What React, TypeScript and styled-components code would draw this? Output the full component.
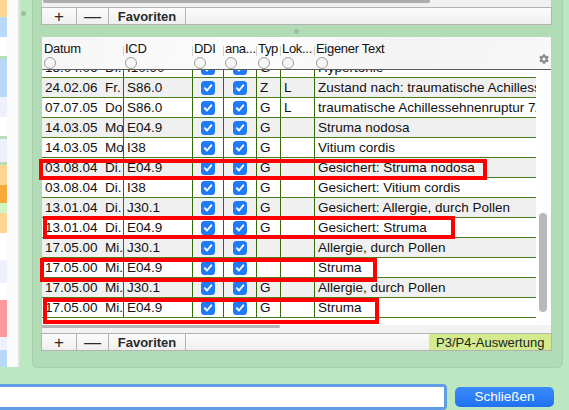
import styled, { createGlobalStyle } from "styled-components";
import { FaCog } from "react-icons/fa";

const GREEN_LINE = "#356a0c";
const COLS = "81px 69px 31px 33px 24px 34px 222px";

const GlobalStyle = createGlobalStyle`
  html, body {
    margin: 0;
    padding: 0;
  }
  body {
    width: 569px;
    height: 410px;
    overflow: hidden;
    background: #bce7c1;
    font-family: "Liberation Sans", Arial, sans-serif;
    font-size: 13.5px;
    color: #111;
  }
`;

const Window = styled.div`
  position: relative;
  display: flex;
  flex-direction: column;
  width: 569px;
  height: 410px;
`;

const Main = styled.div`
  display: flex;
  height: 383px;
`;

const SideList = styled.div`
  display: flex;
  width: 20px;
  height: 367px;
`;

const ColorColumn = styled.div`
  display: flex;
  flex-direction: column;
  width: 7px;
`;

const Segment = styled.div<{ $h: number; $c: string }>`
  height: ${(p) => p.$h}px;
  background: ${(p) => p.$c};
`;

const BlankColumn = styled.div`
  flex: 1;
  background: #fbfbfb;
  border-right: 2px solid #e2e2e2;
`;

const Gutter = styled.div`
  width: 12px;
  padding: 11px 0 0 1px;
  box-sizing: border-box;
`;

const Grip = styled.div`
  width: 5px;
  height: 5px;
  border-radius: 50%;
  background: #9dbfa0;
`;

const Panel = styled.div`
  display: flex;
  flex-direction: column;
  width: 531px;
  height: 368px;
  box-sizing: border-box;
  padding: 0 10px 0 8px;
  background: #b2dcb5;
  border: 1px solid #a7cfaa;
  border-top: none;
  border-radius: 0 0 6px 6px;
`;

const UpperTail = styled.div`
  height: 7px;
  background: #f0f0f0;
  border-left: 1px solid #c8c8c8;
  border-right: 1px solid #c8c8c8;
  box-sizing: border-box;
`;

const UpperThumb = styled.div`
  width: 387px;
  height: 3px;
  margin-left: 1px;
  background: #adadad;
  border-radius: 0 0 2px 2px;
`;

const Toolbar = styled.div`
  display: flex;
  height: 18px;
  box-sizing: border-box;
  border: 1px solid #b3b3b3;
  background: linear-gradient(#fbfbfb, #efefef);
`;

const ToolButton = styled.div<{ $w: number; $bold?: boolean }>`
  display: flex;
  align-items: center;
  justify-content: center;
  width: ${(p) => p.$w}px;
  border-right: 1px solid #b3b3b3;
  font-size: ${(p) => (p.$bold ? "13px" : "17px")};
  font-weight: ${(p) => (p.$bold ? 700 : 400)};
  color: #2a2a2a;
  line-height: 1;
`;

const Filler = styled.div`
  flex: 1;
`;

const ReportButton = styled.div`
  display: flex;
  align-items: center;
  width: 122px;
  padding-left: 7px;
  box-sizing: border-box;
  background: #d3eb8e;
  color: #222;
  font-size: 13px;
  white-space: nowrap;
`;

const Splitter = styled.div`
  display: flex;
  align-items: center;
  justify-content: center;
  height: 12px;
`;

const TableFrame = styled.div`
  display: flex;
  flex-direction: column;
  height: 296px;
  background: #fff;
  border-left: 1px solid #c8c8c8;
  border-right: 1px solid #c8c8c8;
`;

const Header = styled.div`
  display: grid;
  grid-template-columns: ${COLS} 1fr;
  height: 33px;
  box-sizing: border-box;
  border-bottom: 1px solid #5a5a5a;
  background: linear-gradient(100deg, #f6f6f6 0%, #fcfcfc 45%, #f3f3f3 70%, #f8f8f8 100%);
`;

const HeaderCell = styled.div<{ $first?: boolean }>`
  position: relative;
  display: flex;
  flex-direction: column;
  padding: 4px 0 0 2px;
  overflow: hidden;

  &::before {
    content: "";
    display: ${(p) => (p.$first ? "none" : "block")};
    position: absolute;
    left: 0;
    top: 9px;
    height: 10px;
    border-left: 1px solid #d0d0d0;
  }
`;

const HeaderLabel = styled.span`
  font-size: 13px;
  line-height: 15px;
  letter-spacing: -0.3px;
  white-space: nowrap;
`;

const Radio = styled.span`
  width: 10px;
  height: 10px;
  margin-top: 1px;
  border-radius: 50%;
  border: 1px solid #9c9c9c;
  background: #f6f6f6;
`;

const GearCell = styled.div`
  display: flex;
  align-items: flex-end;
  justify-content: center;
  padding-bottom: 5px;
  color: #8c8c8c;
`;

const Body = styled.div`
  display: flex;
  height: 255px;
  overflow: hidden;
`;

const RowsArea = styled.div`
  width: 494px;
  overflow: hidden;
`;

const RowsTrack = styled.div`
  margin-top: -12px;
`;

const Row = styled.div<{ $alt: boolean }>`
  display: grid;
  grid-template-columns: ${COLS};
  height: 20px;
  box-sizing: border-box;
  border-bottom: 1px solid #4a7d1c;
  background: ${(p) => (p.$alt ? "#f0f0f0" : "#ffffff")};
`;

const Cell = styled.div<{ $first?: boolean; $center?: boolean }>`
  display: flex;
  align-items: center;
  justify-content: ${(p) => (p.$center ? "center" : "flex-start")};
  padding: 0 ${(p) => (p.$center ? "0" : "3px")};
  border-left: ${(p) => (p.$first ? "none" : `1px solid ${GREEN_LINE}`)};
  overflow: hidden;
  white-space: pre;
  line-height: 19px;
`;

const Check = styled.span`
  display: flex;
  align-items: center;
  justify-content: center;
  width: 14px;
  height: 14px;
  border-radius: 3.5px;
  background: #1f7bf6;
`;

const VScroll = styled.div`
  flex: 1;
  background: #fdfdfd;
`;

const VThumb = styled.div`
  width: 8px;
  height: 99px;
  margin: 143px 0 0 3px;
  border-radius: 4px;
  background: #b9b9b9;
`;

const HScroll = styled.div`
  height: 8px;
  background: #f2f2f2;
`;

const HThumb = styled.div`
  width: 238px;
  height: 3px;
  border-radius: 0 2px 2px 0;
  background: #b5b5b5;
`;

const BottomBar = styled.div`
  display: flex;
  align-items: center;
  height: 27px;
`;

const Field = styled.div`
  width: 447px;
  height: 26px;
  box-sizing: border-box;
  background: #fff;
  border: 3px solid #5f9ee6;
  border-left: none;
  border-radius: 0 4px 4px 0;
`;

const CloseButton = styled.div`
  display: flex;
  align-items: center;
  justify-content: center;
  width: 99px;
  height: 20px;
  margin-left: 8px;
  border-radius: 5px;
  background: linear-gradient(#3b8cf8, #1f71f2);
  color: #fff;
  font-size: 13.5px;
`;

const Annotation = styled.div<{ $x: number; $y: number; $w: number; $h: number }>`
  position: absolute;
  left: ${(p) => p.$x}px;
  top: ${(p) => p.$y}px;
  width: ${(p) => p.$w}px;
  height: ${(p) => p.$h}px;
  box-sizing: border-box;
  border: 4px solid #ff0000;
  pointer-events: none;
`;

const segments: [number, string][] = [
  [17, "#fdd692"],
  [20, "#b8d9f8"],
  [19, "#ffffff"],
  [3, "#b9dcbb"],
  [19, "#b8d9f8"],
  [19, "#b8d9f8"],
  [20, "#eef1fb"],
  [19, "#ffffff"],
  [3, "#b9dcbb"],
  [23, "#eef1fb"],
  [3, "#b9dcbb"],
  [20, "#fdd692"],
  [18, "#f9a83a"],
  [10, "#cdf6c1"],
  [20, "#fdd692"],
  [27, "#ffffff"],
  [23, "#eef1fb"],
  [17, "#ffffff"],
  [37, "#fc999f"],
  [13, "#eef1fb"],
  [17, "#b8d9f8"],
];

type Entry = {
  date: string;
  icd: string;
  typ: string;
  lok: string;
  text: string;
};

const entries: Entry[] = [
  { date: "15.04.06  Di.", icd: "I10.90", typ: "G", lok: "", text: "Hypertonie" },
  { date: "24.02.06  Fr.", icd: "S86.0", typ: "Z", lok: "L", text: "Zustand nach: traumatische Achillessehnenruptur" },
  { date: "07.07.05  Do.", icd: "S86.0", typ: "G", lok: "L", text: "traumatische Achillessehnenruptur 7/05" },
  { date: "14.03.05  Mo.", icd: "E04.9", typ: "G", lok: "", text: "Struma nodosa" },
  { date: "14.03.05  Mo.", icd: "I38", typ: "G", lok: "", text: "Vitium cordis" },
  { date: "03.08.04  Di.", icd: "E04.9", typ: "G", lok: "", text: "Gesichert: Struma nodosa" },
  { date: "03.08.04  Di.", icd: "I38", typ: "G", lok: "", text: "Gesichert: Vitium cordis" },
  { date: "13.01.04  Di.", icd: "J30.1", typ: "G", lok: "", text: "Gesichert: Allergie, durch Pollen" },
  { date: "13.01.04  Di.", icd: "E04.9", typ: "G", lok: "", text: "Gesichert: Struma" },
  { date: "17.05.00  Mi.", icd: "J30.1", typ: "", lok: "", text: "Allergie, durch Pollen" },
  { date: "17.05.00  Mi.", icd: "E04.9", typ: "", lok: "", text: "Struma" },
  { date: "17.05.00  Mi.", icd: "J30.1", typ: "G", lok: "", text: "Allergie, durch Pollen" },
  { date: "17.05.00  Mi.", icd: "E04.9", typ: "G", lok: "", text: "Struma" },
];

const headers = ["Datum", "ICD", "DDI", "ana...", "Typ", "Lok...", "Eigener Text"];

const marks = [
  { x: 39, y: 159, w: 448, h: 21 },
  { x: 43, y: 216, w: 412, h: 23 },
  { x: 40, y: 258, w: 337, h: 24 },
  { x: 43, y: 298, w: 336, h: 26 },
];

const CheckBox = () => (
  <Check>
    <svg width="10" height="10" viewBox="0 0 10 10">
      <path d="M1.8 5.2 L4 7.5 L8.3 2.3" fill="none" stroke="#fff" strokeWidth="1.9" strokeLinecap="round" strokeLinejoin="round" />
    </svg>
  </Check>
);

const ButtonRow = ({ report }: { report?: boolean }) => (
  <Toolbar>
    <ToolButton $w={34}>+</ToolButton>
    <ToolButton $w={31}>—</ToolButton>
    <ToolButton $w={76} $bold>
      Favoriten
    </ToolButton>
    <Filler />
    {report && <ReportButton>P3/P4-Auswertung</ReportButton>}
  </Toolbar>
);

const App = () => {
  return (
    <>
      <GlobalStyle />
      <Window>
        <Main>
          <SideList>
            <ColorColumn>
              {segments.map(([h, c], i) => (
                <Segment key={i} $h={h} $c={c} />
              ))}
            </ColorColumn>
            <BlankColumn />
          </SideList>
          <Gutter>
            <Grip />
          </Gutter>
          <Panel>
            <UpperTail>
              <UpperThumb />
            </UpperTail>
            <ButtonRow />
            <Splitter>
              <Grip />
            </Splitter>
            <TableFrame>
              <Header>
                {headers.map((h, i) => (
                  <HeaderCell key={h} $first={i === 0}>
                    <HeaderLabel>{h}</HeaderLabel>
                    <Radio />
                  </HeaderCell>
                ))}
                <GearCell>
                  <FaCog size={10} />
                </GearCell>
              </Header>
              <Body>
                <RowsArea>
                  <RowsTrack>
                    {entries.map((e, i) => (
                      <Row key={i} $alt={i % 2 === 1}>
                        <Cell $first>{e.date}</Cell>
                        <Cell>{e.icd}</Cell>
                        <Cell $center>
                          <CheckBox />
                        </Cell>
                        <Cell $center>
                          <CheckBox />
                        </Cell>
                        <Cell>{e.typ}</Cell>
                        <Cell>{e.lok}</Cell>
                        <Cell>{e.text}</Cell>
                      </Row>
                    ))}
                  </RowsTrack>
                </RowsArea>
                <VScroll>
                  <VThumb />
                </VScroll>
              </Body>
              <HScroll>
                <HThumb />
              </HScroll>
            </TableFrame>
            <ButtonRow report />
          </Panel>
        </Main>
        <BottomBar>
          <Field />
          <CloseButton>Schließen</CloseButton>
        </BottomBar>
        {marks.map((m, i) => (
          <Annotation key={i} $x={m.x} $y={m.y} $w={m.w} $h={m.h} />
        ))}
      </Window>
    </>
  );
};

export default App;
